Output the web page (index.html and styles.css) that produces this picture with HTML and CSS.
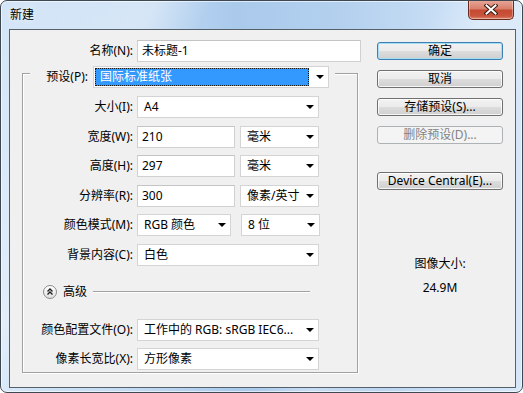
FILE: index.html
```html
<!DOCTYPE html>
<html lang="zh-CN">
<head>
<meta charset="utf-8">
<title>新建</title>
<link rel="stylesheet" href="styles.css">
</head>
<body>
<div class="window">
  <div class="titlebar">
    <span class="title">新建</span>
    <div class="close">
      <svg width="14" height="11" viewBox="0 0 14 11">
        <path d="M2.5 1.5 L11.5 9.5 M11.5 1.5 L2.5 9.5" stroke="#3b1a14" stroke-width="4" stroke-linecap="square" fill="none"/>
        <path d="M2.5 1.5 L11.5 9.5 M11.5 1.5 L2.5 9.5" stroke="#ffffff" stroke-width="2" stroke-linecap="square" fill="none"/>
      </svg>
    </div>
  </div>
  <div class="client">
    <div class="left">
      <div class="row name-row">
        <span class="lbl lbl-name">名称(N):</span>
        <div class="input w-name">未标题-1</div>
      </div>
      <div class="group">
        <div class="legend">
          <span class="lbl lbl-preset">预设(P):</span>
          <div class="select w-preset">
            <span class="focus-box"><span class="sel-hl">国际标准纸张</span></span>
            <i class="arrow"></i>
          </div>
        </div>
        <div class="rows">
          <div class="row">
            <span class="lbl">大小(I):</span>
            <div class="select w-full"><span class="sel-text">A4</span><i class="arrow"></i></div>
          </div>
          <div class="row">
            <span class="lbl">宽度(W):</span>
            <div class="input w-num">210</div>
            <div class="select w-unit"><span class="sel-text">毫米</span><i class="arrow"></i></div>
          </div>
          <div class="row">
            <span class="lbl">高度(H):</span>
            <div class="input w-num">297</div>
            <div class="select w-unit"><span class="sel-text">毫米</span><i class="arrow"></i></div>
          </div>
          <div class="row">
            <span class="lbl">分辨率(R):</span>
            <div class="input w-num">300</div>
            <div class="select w-unit"><span class="sel-text">像素/英寸</span><i class="arrow"></i></div>
          </div>
          <div class="row">
            <span class="lbl">颜色模式(M):</span>
            <div class="select w-mode"><span class="sel-text">RGB 颜色</span><i class="arrow"></i></div>
            <div class="select w-unit"><span class="sel-text">8 位</span><i class="arrow"></i></div>
          </div>
          <div class="row">
            <span class="lbl">背景内容(C):</span>
            <div class="select w-full"><span class="sel-text">白色</span><i class="arrow"></i></div>
          </div>
        </div>
        <div class="advanced">
          <span class="adv-btn">
            <svg width="14" height="14" viewBox="0 0 14 14">
              <path d="M4.5 6.5 L7 4 L9.5 6.5" stroke="#1e1e1e" stroke-width="1.4" fill="none"/>
              <path d="M4.5 9.5 L7 7 L9.5 9.5" stroke="#1e1e1e" stroke-width="1.4" fill="none"/>
            </svg>
          </span>
          <span class="adv-text">高级</span>
          <span class="adv-line"></span>
        </div>
        <div class="rows rows-adv">
          <div class="row">
            <span class="lbl">颜色配置文件(O):</span>
            <div class="select w-full"><span class="sel-text">工作中的 RGB: sRGB IEC6...</span><i class="arrow"></i></div>
          </div>
          <div class="row">
            <span class="lbl">像素长宽比(X):</span>
            <div class="select w-full"><span class="sel-text">方形像素</span><i class="arrow"></i></div>
          </div>
        </div>
      </div>
    </div>
    <div class="right">
      <button class="btn btn-default">确定</button>
      <button class="btn">取消</button>
      <button class="btn">存储预设(S)...</button>
      <button class="btn" disabled>删除预设(D)...</button>
      <button class="btn btn-device">Device Central(E)...</button>
      <div class="size-label">图像大小:</div>
      <div class="size-value">24.9M</div>
    </div>
  </div>
</div>
</body>
</html>
```

FILE: styles.css
```css
* { box-sizing: border-box; }

html, body {
  margin: 0;
  padding: 0;
  background: #ffffff;
}

body {
  font-family: "Noto Sans", "Noto Sans CJK SC", sans-serif;
  font-size: 12px;
  color: #000;
}

.window {
  width: 523px;
  height: 393px;
  border: 1px solid #3e4852;
  border-radius: 7px;
  background:
    linear-gradient(115deg, rgba(255,255,255,0) 0%, rgba(255,255,255,0.35) 22%, rgba(255,255,255,0) 30%, rgba(255,255,255,0) 62%, rgba(255,255,255,0.3) 70%, rgba(255,255,255,0) 80%),
    linear-gradient(to right, #d3e5f7 0%, #c3dbf3 25%, #aacaec 45%, #b3d0ee 65%, #c8def5 85%, #d6e7f8 100%);
  box-shadow: inset 0 0 0 1px rgba(255,255,255,0.6);
  display: flex;
  flex-direction: column;
  overflow: hidden;
}

.titlebar {
  height: 28px;
  display: flex;
  justify-content: space-between;
  align-items: flex-start;
  padding-left: 9px;
  padding-right: 8px;
}

.title {
  margin-top: 6px;
  font-size: 12px;
  line-height: 16px;
  color: #000;
  text-shadow: 0 0 6px rgba(255,255,255,0.9);
}

.close {
  margin-top: -1px;
  width: 46px;
  height: 20px;
  border: 1px solid #6a2a20;
  border-top: none;
  border-radius: 0 0 5px 5px;
  background: linear-gradient(to bottom, #e9a99a 0%, #d8806c 45%, #c64a32 55%, #c9553c 85%, #de8a6e 100%);
  box-shadow: inset 0 0 0 1px rgba(255,255,255,0.35);
  display: flex;
  align-items: center;
  justify-content: center;
}

.client {
  margin-left: 8px;
  width: 507px;
  height: 359px;
  border: 1px solid #56606b;
  background: #f0f0f0;
  display: flex;
}

.left {
  width: 348px;
  display: flex;
  flex-direction: column;
}

.row {
  display: flex;
  align-items: center;
  height: 22px;
}

.name-row {
  margin-top: 10px;
}

.lbl {
  text-align: right;
  white-space: nowrap;
  line-height: 16px;
  flex: none;
}

.lbl-name {
  width: 123px;
  margin-right: 4px;
}

.input {
  height: 22px;
  background: #fff;
  border: 1px solid #d0d0d0;
  border-top-color: #c4c4c4;
  padding-left: 4px;
  display: flex;
  align-items: center;
  line-height: 16px;
  flex: none;
}

.w-name { width: 224px; }
.w-num { width: 98px; }

.select {
  height: 22px;
  background: #fff;
  border: 1px solid #d4d4d4;
  display: flex;
  align-items: center;
  padding-left: 6px;
  padding-right: 4px;
  flex: none;
}

.sel-text {
  flex: 1;
  white-space: nowrap;
  line-height: 16px;
}

.arrow {
  width: 0;
  height: 0;
  border-left: 4px solid transparent;
  border-right: 4px solid transparent;
  border-top: 4px solid #000;
  flex: none;
}

.w-full { width: 182px; }
.w-unit { width: 79px; margin-left: 5px; }
.w-mode { width: 94px; margin-right: 5px; }
.w-num + .w-unit { margin-left: 5px; }
.w-mode + .w-unit { margin-left: 5px; }

.group {
  margin-top: 11px;
  margin-left: 12px;
  width: 336px;
  height: 300px;
  border: 1px solid #a2a2a2;
  box-shadow: inset 1px 1px 0 #fff, 1px 1px 0 #fff;
  display: flex;
  flex-direction: column;
}

.legend {
  margin-top: -8px;
  margin-left: 7px;
  padding-right: 6px;
  align-self: flex-start;
  background: #f0f0f0;
  display: flex;
  align-items: center;
  height: 22px;
}

.lbl-preset {
  width: 58px;
  margin-right: 5px;
}

.w-preset {
  width: 236px;
  padding-left: 1px;
  padding-right: 4px;
}

.focus-box {
  flex: 1;
  height: 18px;
  margin-right: 7px;
  border: 1px dotted #1b1b1b;
  background: #3399ff;
  display: flex;
  align-items: center;
}

.sel-hl {
  color: #fff;
  padding-left: 4px;
  line-height: 16px;
  white-space: nowrap;
}

.rows {
  display: flex;
  flex-direction: column;
  gap: 7.5px;
  margin-top: 8px;
}

.rows .lbl {
  width: 110px;
  margin-right: 4px;
}

.advanced {
  display: flex;
  align-items: center;
  height: 14px;
  margin-top: 19px;
  margin-left: 20px;
  margin-right: 47px;
}

.adv-btn {
  width: 14px;
  height: 14px;
  border-radius: 50%;
  border: 1px solid #8c8c8c;
  background: linear-gradient(to bottom, #ffffff 0%, #f1f1f1 50%, #dcdcdc 100%);
  display: flex;
  align-items: center;
  justify-content: center;
  flex: none;
}

.adv-btn svg { display: block; margin: -1px; }

.adv-text {
  margin-left: 6px;
  line-height: 16px;
  white-space: nowrap;
}

.adv-line {
  flex: 1;
  margin-left: 6px;
  height: 2px;
  border-top: 1px solid #a2a2a2;
  border-bottom: 1px solid #fff;
}

.rows-adv {
  margin-top: 20px;
  gap: 7px;
}

.right {
  margin-left: 19px;
  width: 126px;
  display: flex;
  flex-direction: column;
  align-items: center;
}

.btn {
  width: 126px;
  height: 18px;
  margin-top: 10px;
  padding: 0;
  font-family: "Noto Sans", "Noto Sans CJK SC", sans-serif;
  font-size: 12px;
  line-height: 14px;
  color: #000;
  border: 1px solid #707070;
  border-radius: 3px;
  background: linear-gradient(to bottom, #f2f2f2 0%, #ebebeb 50%, #dddddd 51%, #cfcfcf 100%);
  box-shadow: inset 0 0 0 1px rgba(255,255,255,0.8);
}

.btn:first-child { margin-top: 12px; }

.btn-default {
  border-color: #3c7fb1;
  box-shadow: inset 0 0 0 1px #a6dcf5;
  background: linear-gradient(to bottom, #eaf6fd 0%, #d9f0fc 50%, #bee6fd 51%, #a7d9f5 100%);
  background: linear-gradient(to bottom, #f2f2f2 0%, #ebebeb 50%, #dddddd 51%, #cfcfcf 100%);
}

.btn:disabled {
  border-color: #adb2b5;
  background: #f4f4f4;
  color: #838383;
  box-shadow: none;
}

.btn-device { margin-top: 28px; }

.size-label {
  margin-top: 67px;
  line-height: 14px;
  white-space: nowrap;
}

.size-value {
  margin-top: 10px;
  line-height: 14px;
}
```
